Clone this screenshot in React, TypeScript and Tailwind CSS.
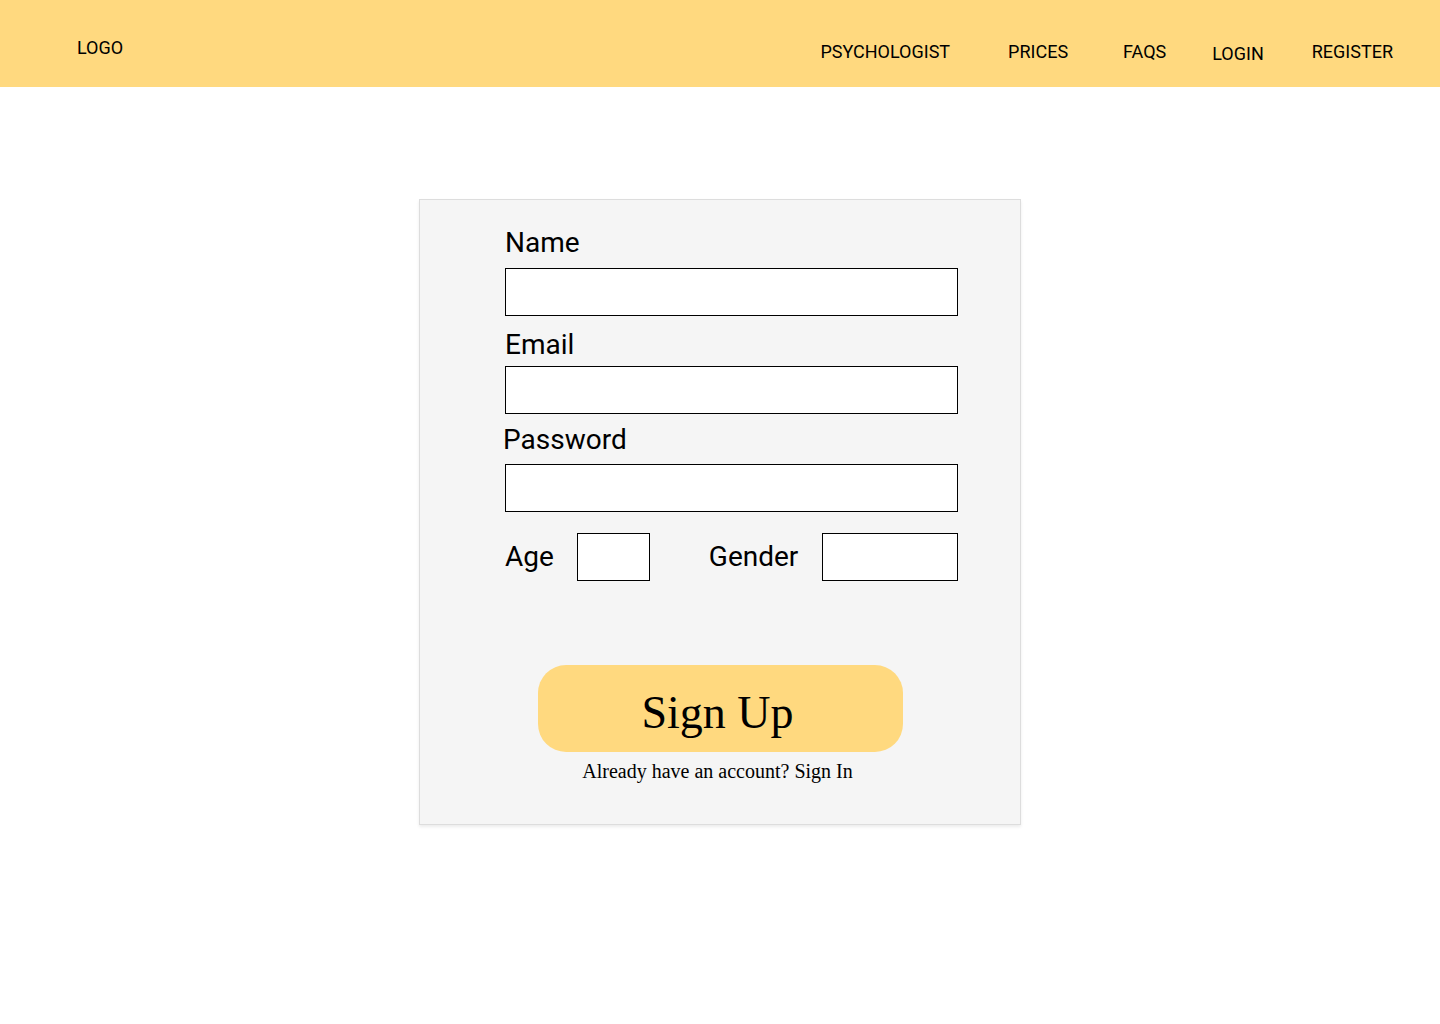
const navItems = [
  { label: 'PSYCHOLOGIST', cls: '' },
  { label: 'PRICES', cls: 'ml-[58px]' },
  { label: 'FAQS', cls: 'ml-[55px]' },
  { label: 'LOGIN', cls: 'ml-[46px] mt-[2px]' },
  { label: 'REGISTER', cls: 'ml-[48px]' },
]

const App = () => {
  return (
    <div className="min-h-screen bg-white text-black font-['Roboto',sans-serif]">
      <header className="h-[87px] bg-[#ffd97f] flex items-start">
        <span className="ml-[77px] mt-[37px] text-[18px] leading-[21px]">LOGO</span>
        <nav className="ml-auto mr-[47px] mt-[41px] flex items-start">
          {navItems.map((item) => (
            <a key={item.label} href="#" className={`text-[18px] leading-[21px] ${item.cls}`}>
              {item.label}
            </a>
          ))}
        </nav>
      </header>

      <main className="flex justify-center pt-[112px]">
        <form className="w-[602px] h-[626px] bg-[#f5f5f5] border border-[#dddddd] shadow-[0_2px_3px_rgba(0,0,0,0.08)] pl-[85px] pt-[28px]">
          <label className="block text-[28px] leading-[30px]">Name</label>
          <input type="text" className="block mt-[10px] w-[453px] h-[48px] bg-white border border-black outline-none" />

          <label className="block mt-[14px] text-[28px] leading-[30px]">Email</label>
          <input type="email" className="block mt-[6px] w-[453px] h-[48px] bg-white border border-black outline-none" />

          <label className="block mt-[11px] -ml-[2px] text-[28px] leading-[30px]">Password</label>
          <input type="password" className="block mt-[9px] w-[453px] h-[48px] bg-white border border-black outline-none" />

          <div className="mt-[21px] w-[453px] flex items-center">
            <label className="text-[28px] leading-[30px]">Age</label>
            <input type="text" className="ml-[23px] w-[73px] h-[48px] bg-white border border-black outline-none" />
            <label className="ml-[59px] text-[28px] leading-[30px]">Gender</label>
            <input type="text" className="ml-auto w-[136px] h-[48px] bg-white border border-black outline-none" />
          </div>

          <div className="-ml-[85px] mt-[84px] flex flex-col items-center font-['Liberation_Serif',serif]">
            <button type="submit" className="w-[365px] h-[87px] rounded-[28px] bg-[#ffd97f] text-[46px] leading-[50px] pt-[8px] pr-[5px]">
              Sign Up
            </button>
            <p className="mt-[7px] text-[20px] leading-[24px] -ml-[5px]">Already have an account? Sign In</p>
          </div>
        </form>
      </main>
    </div>
  )
}

export default App
